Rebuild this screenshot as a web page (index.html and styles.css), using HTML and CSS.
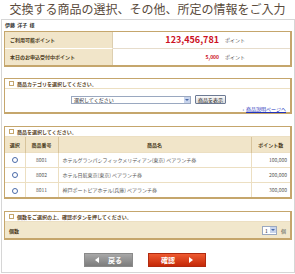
FILE: index.html
```html
<!DOCTYPE html>
<html lang="ja">
<head>
  <meta charset="UTF-8">
  <title>商品の選択</title>
  <link rel="stylesheet" href="styles.css">
</head>
<body>
  <h1 class="page-title">交換する商品の選択、その他、所定の情報をご入力</h1>

  <div class="frame">
    <div class="user-name">伊藤&nbsp;&nbsp;洋子&nbsp;&nbsp;様</div>

    <!-- Points -->
    <div class="points">
      <div class="points-label">ご利用可能ポイント</div>
      <div class="points-value big">123,456,781</div>
      <div class="points-unit">ポイント</div>
      <div class="points-label">本日のお申込受付中ポイント</div>
      <div class="points-value">5,000</div>
      <div class="points-unit">ポイント</div>
    </div>

    <!-- Category -->
    <div class="section">
      <div class="section-head"><span class="box-mark"></span>商品カテゴリを選択してください。</div>
      <div class="category-body">
        <div class="category-row">
          <div class="fake-select wide"><span>選択してください</span><span class="arrow"></span></div>
          <button class="small-btn">商品を表示</button>
        </div>
        <div class="link-row"><span class="link-mark">›</span><a href="#">商品説明ページへ</a></div>
      </div>
    </div>

    <!-- Products -->
    <div class="section">
      <div class="section-head"><span class="box-mark"></span>商品を選択してください。</div>
      <table class="items">
        <thead>
          <tr>
            <th class="c-sel">選択</th>
            <th class="c-no">商品番号</th>
            <th class="c-name">商品名</th>
            <th class="c-pt">ポイント数</th>
          </tr>
        </thead>
        <tbody>
          <tr>
            <td class="c-sel"><span class="radio"></span></td>
            <td class="c-no">8001</td>
            <td class="c-name">ホテルグランパシフィックメリディアン(東京) ペアランチ券</td>
            <td class="c-pt">100,000</td>
          </tr>
          <tr>
            <td class="c-sel"><span class="radio"></span></td>
            <td class="c-no">8002</td>
            <td class="c-name">ホテル日航東京(東京) ペアランチ券</td>
            <td class="c-pt">200,000</td>
          </tr>
          <tr>
            <td class="c-sel"><span class="radio"></span></td>
            <td class="c-no">8011</td>
            <td class="c-name">神戸ポートピアホテル(兵庫) ペアランチ券</td>
            <td class="c-pt">300,000</td>
          </tr>
        </tbody>
      </table>
    </div>

    <!-- Quantity -->
    <div class="section">
      <div class="section-head"><span class="box-mark"></span>個数をご選択の上、確認ボタンを押してください。</div>
      <div class="qty-row">
        <div class="qty-label">個数</div>
        <div class="qty-input">
          <div class="fake-select narrow"><span>1</span><span class="arrow"></span></div>
          <span class="qty-unit">個</span>
        </div>
      </div>
    </div>

    <!-- Buttons -->
    <div class="actions">
      <button class="btn btn-back"><span class="tri left"></span>戻る</button>
      <button class="btn btn-next">確認<span class="tri right"></span></button>
    </div>
  </div>
</body>
</html>
```

FILE: styles.css
```css
/* Base */
* {
  box-sizing: border-box;
}

body {
  margin: 0;
  width: 295px;
  font-family: "Noto Sans CJK JP", "Noto Sans", sans-serif;
  font-size: 5px;
  line-height: 7px;
  color: #333;
  background: #fff;
}

/* Page title */
.page-title {
  margin: 0;
  height: 19px;
  font-size: 12px;
  font-weight: normal;
  line-height: 17px;
  text-align: center;
  color: #5a4b3c;
}

/* Outer frame */
.frame {
  margin-left: 1px;
  width: 294px;
  height: 254px;
  padding: 0 2px;
  border: 1px solid #d6d6d6;
}

.user-name {
  height: 11px;
  line-height: 10px;
  padding-left: 1px;
  font-weight: bold;
  color: #333;
}

/* Points box */
.points {
  display: grid;
  grid-template-columns: 108px 106px 1fr;
  border: 1px solid #c5a66c;
  border-right-width: 2px;
  border-bottom-width: 2px;
}

.points-label {
  height: 17px;
  line-height: 16px;
  padding-left: 5px;
  background: #f1e5c9;
  border-right: 1px solid #ddcfb0;
  font-weight: bold;
  color: #4a3a20;
}

.points-label:first-child {
  border-bottom: 1px solid #fff;
}

.points-label:nth-child(4) {
  height: 16px;
}

.points-value,
.points-unit {
  height: 16px;
  line-height: 16px;
  color: #cc1122;
}

.points-value:nth-child(2),
.points-unit:nth-child(3) {
  height: 17px;
  border-bottom: 1px solid #e6dccb;
}

.points-value {
  text-align: right;
  font-weight: bold;
}

.points-value.big {
  font-size: 9px;
}

.points-unit {
  padding-left: 6px;
  color: #555;
}

/* Sections */
.section {
  margin-top: 11px;
  border: 1px solid #c5a66c;
  border-right-width: 2px;
  border-bottom-width: 2px;
}

.section + .section {
  margin-top: 12px;
}

.section-head {
  display: flex;
  align-items: center;
  gap: 3px;
  height: 10px;
  padding-left: 4px;
  border-bottom: 1px solid #ecdfc2;
  font-weight: bold;
  color: #5b4527;
}

.box-mark {
  width: 5px;
  height: 5px;
  border: 1px solid #c5a66c;
  background: #fff;
}

/* Category */
.category-body {
  height: 23px;
  padding-top: 6px;
}

.category-row {
  display: flex;
  align-items: center;
  gap: 4px;
  padding-left: 66px;
}

.fake-select {
  display: flex;
  align-items: center;
  justify-content: space-between;
  height: 8px;
  border: 1px solid #9aa8c0;
  background: #fff;
  color: #222;
}

.fake-select span:first-child {
  padding-left: 2px;
}

.fake-select.wide {
  width: 120px;
}

.fake-select.narrow {
  width: 15px;
  height: 9px;
}

.arrow {
  position: relative;
  width: 6px;
  height: 6px;
  background: #c8d4ec;
}

.arrow::after {
  content: "";
  position: absolute;
  left: 1px;
  top: 2px;
  border-left: 2px solid transparent;
  border-right: 2px solid transparent;
  border-top: 2px solid #4a6aa8;
}

.small-btn {
  height: 9px;
  padding: 0 2px;
  border: 1px solid #6c7a94;
  border-radius: 1px;
  background: linear-gradient(#fafafa, #dcdcdc);
  font-family: inherit;
  font-size: 5px;
  line-height: 7px;
  color: #222;
}

.link-row {
  margin-top: 1px;
  padding-right: 4px;
  text-align: right;
}

.link-mark {
  color: #3355aa;
  margin-right: 2px;
}

.link-row a {
  color: #2233bb;
  text-decoration: underline;
}

/* Product table */
.items {
  width: 100%;
  border-collapse: collapse;
}

.items th,
.items td {
  padding: 0;
}

.items th {
  height: 15px;
  background: #f1e5c9;
  border-left: 1px solid #d8c49c;
  color: #4a3a20;
  font-weight: bold;
  text-align: center;
}

.items td {
  height: 15px;
  border-top: 1px solid #ecdfc2;
  border-left: 1px solid #ecdfc2;
  color: #555;
}

.items th:first-child,
.items td:first-child {
  border-left: none;
}

.items .c-sel {
  width: 20px;
  text-align: center;
}

.items .c-no {
  width: 33px;
  text-align: center;
}

.items td.c-name {
  padding-left: 4px;
}

.items .c-pt {
  width: 39px;
}

.items td.c-pt {
  text-align: right;
  padding-right: 3px;
}

.radio {
  display: inline-block;
  width: 6px;
  height: 6px;
  border: 1px solid #4a6aa8;
  border-radius: 50%;
  background: #fff;
  vertical-align: middle;
}

/* Quantity */
.qty-row {
  display: flex;
  align-items: center;
  justify-content: space-between;
  height: 16px;
  padding: 0 4px;
  background: #f1e7cc;
}

.qty-label {
  font-weight: bold;
  color: #4a3a20;
}

.qty-input {
  display: flex;
  align-items: center;
  gap: 4px;
  color: #555;
}

/* Action buttons */
.actions {
  display: flex;
  justify-content: center;
  gap: 15px;
  margin-top: 13px;
  padding-right: 6px;
}

.btn {
  display: flex;
  align-items: center;
  justify-content: center;
  gap: 9px;
  height: 14px;
  padding: 0;
  font-family: inherit;
  font-size: 7px;
  font-weight: bold;
  color: #fff;
}

.btn-back {
  width: 49px;
  background: linear-gradient(#a8a8a8, #7c7c7c);
  border: 1px solid #8a8a8a;
}

.btn-next {
  width: 58px;
  gap: 14px;
  background: linear-gradient(#ee5a30, #c42808);
  border: 1px solid #b02a10;
}

.tri {
  width: 0;
  height: 0;
  border-top: 3px solid transparent;
  border-bottom: 3px solid transparent;
}

.tri.left {
  border-right: 4px solid #fff;
}

.tri.right {
  border-left: 4px solid #fff;
}
```
